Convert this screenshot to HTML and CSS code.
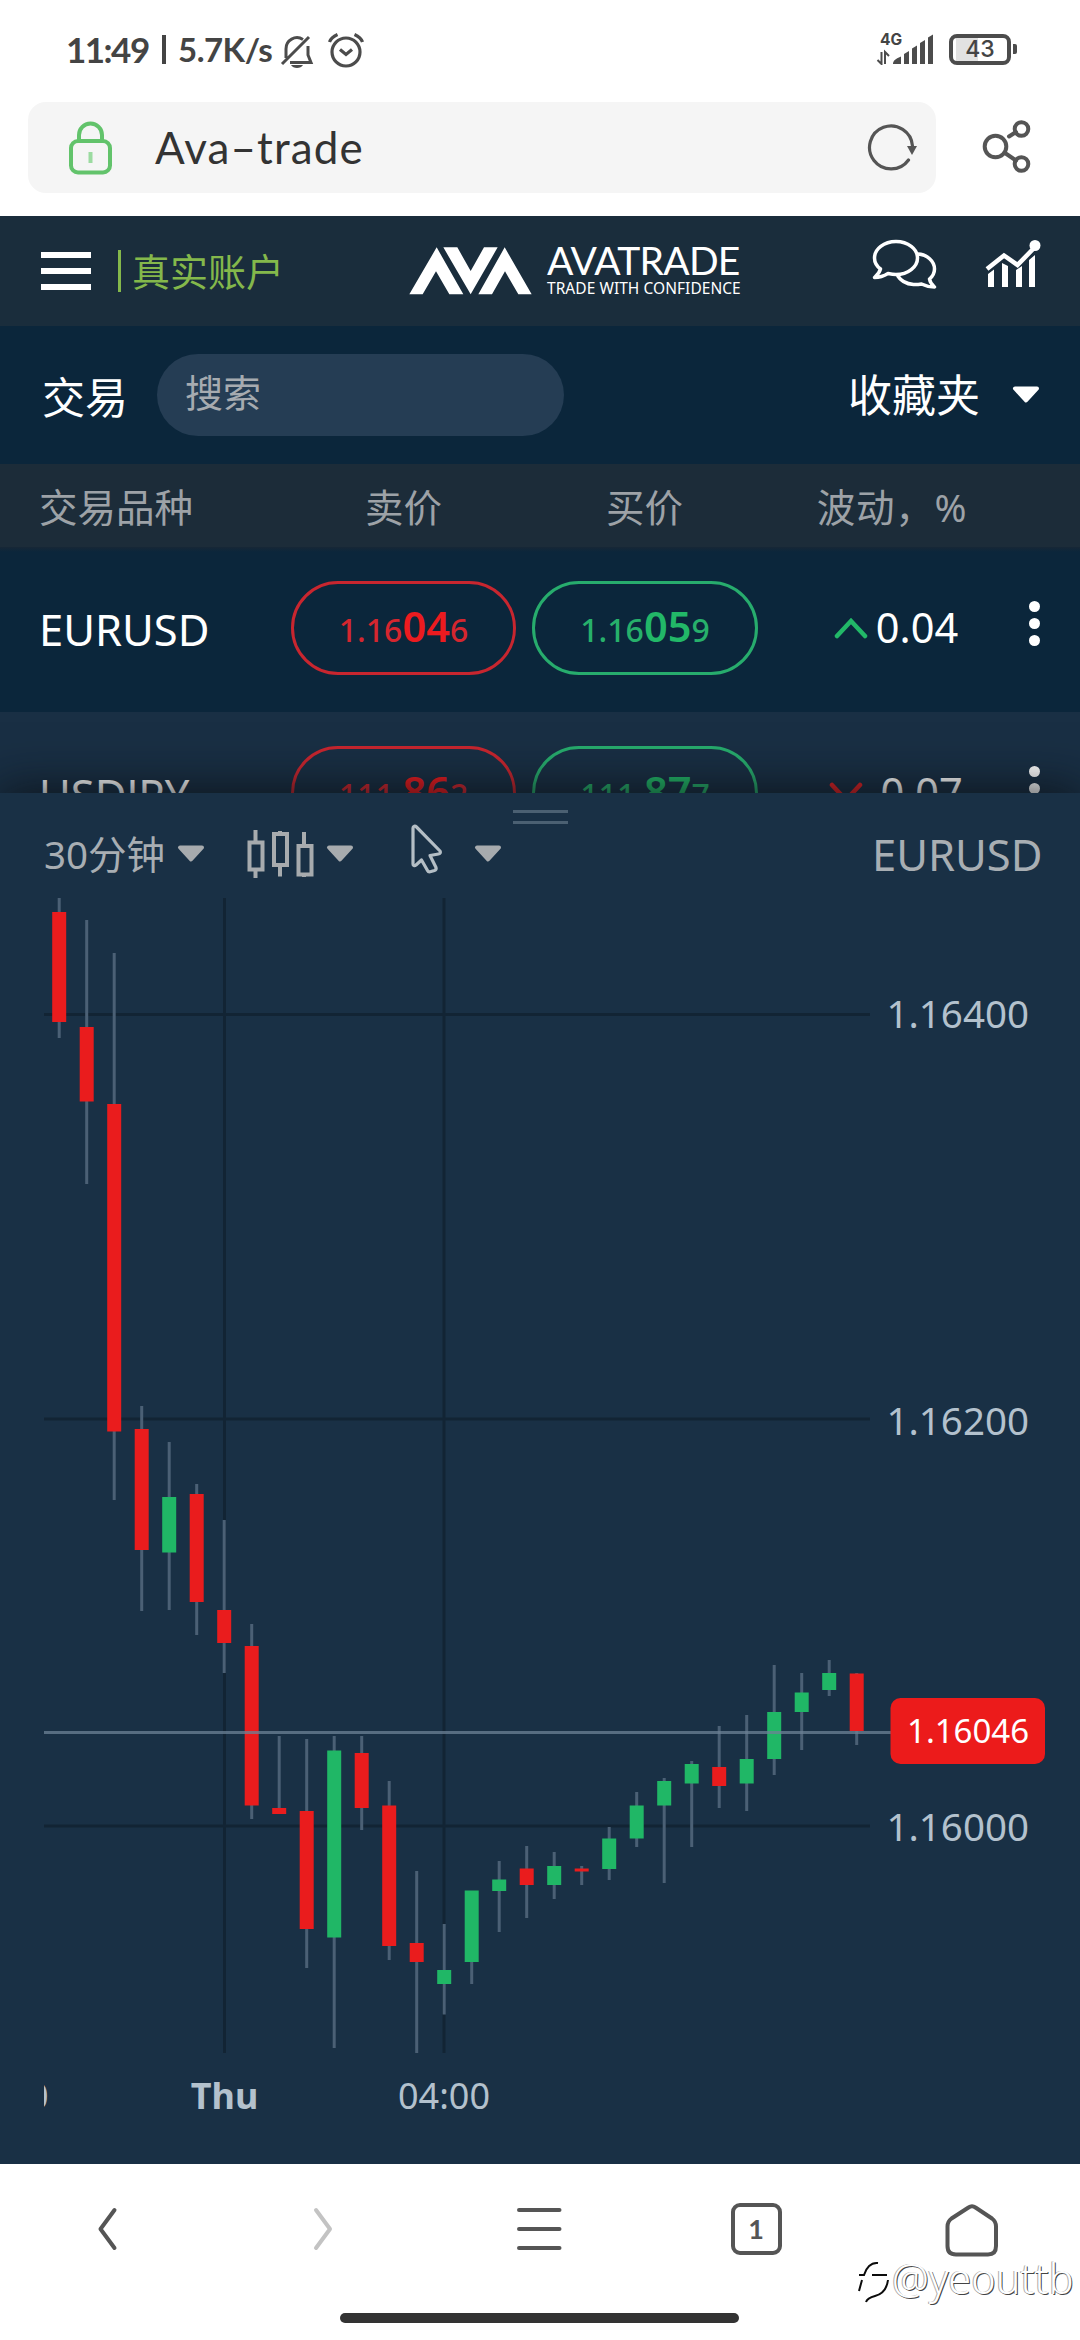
FILE: index.html
```html
<!DOCTYPE html>
<html lang="zh-CN">
<head>
<meta charset="utf-8">
<title>Ava-trade</title>
<link rel="stylesheet" href="styles.css">
</head>
<body>
<div class="status">
  <span class="clock">11:49</span><i class="sep"></i><span class="speed">5.7K/s</span>
  <svg class="mute" width="34" height="36" viewBox="280 32 34 36" fill="none" stroke="#4c4c4c" stroke-width="3">
    <path d="M286 58V49a11 11 0 0 1 17-9.500M308 46v9l3 7.500H290M282 64 309 37"/>
    <path d="M291 65h12c-2 4-10 4-12 0z" fill="#4c4c4c" stroke="none"/>
  </svg>
  <svg class="alarm" width="38" height="38" viewBox="327 31 38 38" fill="none" stroke="#4c4c4c" stroke-width="3.200">
    <circle cx="346" cy="52" r="14"/><path d="M340 49.500l6 5 6-5M329.500 42c1-3 3.500-5.500 8-7.500M362.500 42c-1-3-3.500-5.500-8-7.500"/>
  </svg>
  <div class="network">
    <span class="net-type">4G</span>
    <svg width="58" height="32" viewBox="875 32 58 32" fill="#4c4c4c">
      <path d="M880.500 51v12l-4-4M884 63V51l4 4" fill="none" stroke="#4c4c4c" stroke-width="2"/>
      <path d="M892 63c0-3 2-5 8-7.500V63zM903 53l5-3v13h-5zM911 47.500l5-3V63h-5zM919 42l5-3v24h-5zM927 36.500l5-3V63h-5z"/>
    </svg>
  </div>
  <div class="battery">43</div><i class="nub"></i>
</div>

<div class="browser">
  <div class="address">
    <svg class="lock" width="46" height="56" viewBox="67 118 46 56" fill="none" stroke="#62c36b" stroke-width="4">
      <path d="M79 139v-6a11.500 11.500 0 0 1 23 0v6" /><rect x="71" y="139" width="39" height="31.500" rx="7"/><path d="M90.500 150v11" stroke="#9bdba0"/>
    </svg>
    <span class="site">Ava–trade</span>
    <svg class="reload" width="54" height="52" viewBox="865 121 54 52" fill="none" stroke="#555" stroke-width="3.200">
      <path d="M907.500 159a21.500 21.500 0 1 1 4-14" stroke-linecap="round"/><path d="M906 145h10l-5 9z" fill="#555" stroke="none"/>
    </svg>
  </div>
  <svg class="share" width="52" height="58" viewBox="981 118 52 58" fill="none" stroke="#555" stroke-width="4">
    <circle cx="995.500" cy="146.500" r="10.800"/><circle cx="1021.500" cy="129" r="6.800"/><circle cx="1021.500" cy="164" r="6.800"/>
    <path d="M1009 136.500l7-4.500M1005 153l11 7.500" stroke-linecap="round"/>
  </svg>
</div>

<div class="appbar">
  <div class="burger"><i></i><i></i><i></i></div>
  <span class="account">真实账户</span>
  <svg class="mark" width="124" height="48" viewBox="27 65 372 144" fill="#fff">
    <path d="M28 207 110 66l80 141h-42l-40-69-40 69zM130 66h42l40 71 40-71h41l-81 141zM314 66 235 207h41l39-69 40 69h40z"/>
  </svg>
  <div class="brand"><span class="brand-name">AVATRADE</span><span class="brand-tag">TRADE WITH CONFIDENCE</span></div>
  <svg class="chat" width="66" height="54" viewBox="870 238 66 54" fill="none" stroke="#fff" stroke-width="3.500" stroke-linejoin="round">
    <path d="M879.500 269c-4-3-6-7-6-11 0-9 9.500-16.500 21.500-16.500s21.500 7.500 21.500 16.500-9.500 16.500-21.500 16.500c-3 0-5.500-.500-8-1-4 2.500-8 4-13.500 4 3-2.500 5-5 6-8.500z"/>
    <path d="M917 254c9 .500 16.500 7 16.500 15 0 4-2 7.500-5 10 .500 3 2 5.500 5 8-5 0-9-1-13-3-3 .500-5.500 .700-8 .500-7-.500-13-4-16-9"/>
  </svg>
  <svg class="trend" width="58" height="50" viewBox="984 239 58 50" fill="#fff">
    <path d="M986 269l17-13.500 13.500 9.500L1034 247" fill="none" stroke="#fff" stroke-width="4.500"/><circle cx="1034" cy="245.500" r="5.500"/>
    <path d="M987 274l6-4.500V287h-6zM1001 263l6 3v21h-6zM1015 270l6-4v21h-6zM1028 260l6-5v32h-6z"/>
  </svg>
</div>

<div class="search-row">
  <span class="title">交易</span>
  <div class="search">搜索</div>
  <span class="favorites">收藏夹</span>
  <svg width="28" height="18" viewBox="0 0 28 18"><path class="tri white" d="M3 2.500h22L14 14.500z"/></svg>
</div>

<div class="line head">
  <span class="symbol">交易品种</span><span class="cell">卖价</span><span class="cell">买价</span><span class="change">波动，%</span>
</div>

<div class="quotes">
  <div class="line quote first">
    <span class="symbol">EURUSD</span>
    <div class="cell price sell"><span>1.16<b>04</b>6</span></div>
    <div class="cell price buy"><span>1.16<b>05</b>9</span></div>
    <span class="change"><svg width="34" height="22" viewBox="0 0 34 22"><path class="chev up" d="M3 19 17 4l14 15"/></svg>0.04</span>
    <span class="dots"><i></i><i></i><i></i></span>
  </div>
  <div class="line quote second">
    <span class="symbol">USDJPY</span>
    <div class="cell price sell"><span>111.<b>86</b>2</span></div>
    <div class="cell price buy"><span>111.<b>87</b>7</span></div>
    <span class="change"><svg width="34" height="22" viewBox="0 0 34 22"><path class="chev down" d="M3 3l14 15L31 3"/></svg>-0.07</span>
    <span class="dots"><i></i><i></i><i></i></span>
  </div>
</div>

<div class="panel">
  <i class="grip"></i>
  <div class="tools">
    <span class="period">30分钟</span>
    <svg class="a1" width="28" height="18" viewBox="0 0 28 18"><path class="tri" d="M3 2.500h22L14 14.500z"/></svg>
    <svg class="candles" width="68" height="50" viewBox="245 829 68 50" fill="none" stroke="#a7abae" stroke-width="4">
      <path d="M248.500 842.500h13v27h-13zM273 834h13v31h-13zM297.500 846h13v28.500h-13zM254.500 830v12M254.500 870v8M279 831v3M279 865v11.500M303 832v14M303 875v2"/>
    </svg>
    <svg class="a2" width="28" height="18" viewBox="0 0 28 18"><path class="tri" d="M3 2.500h22L14 14.500z"/></svg>
    <svg class="cursor" width="36" height="52" viewBox="408 823 36 52" fill="none" stroke="#b4bec5" stroke-width="3.200" stroke-linejoin="round">
      <path d="M412 828c0-2 2-2.500 3.500-1L439 851c1 1.500 0 3-1.500 3L429 855.500l6 12c.500 1.500 0 2.500-1.500 3l-3.500 1c-1.500 .500-3 0-3.500-1l-6-10.500-5.500 5c-1.500 1.200-3 .500-3-1z"/>
    </svg>
    <svg class="a3" width="28" height="18" viewBox="0 0 28 18"><path class="tri" d="M3 2.500h22L14 14.500z"/></svg>
    <span class="pair">EURUSD</span>
  </div>
  <svg class="chart" width="1080" height="1266" viewBox="0 898 1080 1266">
    <path class="grid" d="M44 1014.500H870M44 1419H870M44 1826H870M224.500 898V2053M444 898V2053"/>
    <path class="wick" d="M59.200 898V1038M86.700 920V1184M114.200 953V1500M141.700 1406V1611M169.200 1442V1610M196.700 1484V1635M224.200 1520V1673M251.700 1624V1819M279.200 1736V1812M306.700 1739V1968M334.200 1736V2048M361.700 1736V1830M389.200 1781V1960M416.700 1871V2053M444.200 1924V2014.500M471.700 1891V1984M499.200 1861V1932M526.700 1846V1918M554.200 1852V1899M581.700 1866V1885M609.200 1827V1880M636.700 1792V1847M664.200 1778V1883M691.700 1761V1847M719.200 1726V1808M746.700 1715V1811M774.200 1665V1775M801.700 1673V1750M829.200 1660V1696M856.700 1673V1745"/>
    <path class="fall" d="M59.200 912V1022M86.700 1027V1101.500M114.200 1104V1431.500M141.700 1429V1550M196.700 1494V1602M224.200 1610V1643M251.700 1646V1805.500M279.200 1808V1814M306.700 1811V1929M361.700 1753V1808M389.200 1805.500V1946M416.700 1943V1962M526.700 1868.500V1885M581.700 1868.500V1871.500M719.200 1767V1786M856.700 1673.500V1731"/>
    <path class="rise" d="M169.200 1497V1552.500M334.200 1750.500V1937.500M444.200 1970V1984M471.700 1890.500V1962M499.200 1879.500V1891M554.200 1866V1885M609.200 1838.500V1869M636.700 1805.500V1838.500M664.200 1781V1805.500M691.700 1764V1783.500M746.700 1759V1783.500M774.200 1712V1759M801.700 1692.500V1712M829.200 1673V1690"/>
    <path class="last" d="M44 1732.500H892"/>
    <g class="axis">
      <text x="886.500" y="1028">1.16400</text><text x="886.500" y="1434.500">1.16200</text><text x="886.500" y="1841">1.16000</text>
    </g>
    <rect x="890.500" y="1698" width="154.500" height="66" rx="10" fill="#ec1b1b"/>
    <text class="tag" x="907" y="1743">1.16046</text>
    <g class="time"><text class="day" x="224.500" y="2108.500">Thu</text><text x="444" y="2108.500">04:00</text></g>
    <svg x="44" y="2070" width="60" height="50"><text class="cut" x="4.500" y="38.500">20:00</text></svg>
  </svg>
</div>

<div class="nav">
  <svg width="216" height="64" viewBox="0 2196 216 64"><path class="ln" d="M114.500 2210l-14 19 14 19"/></svg>
  <svg width="216" height="64" viewBox="216 2196 216 64"><path class="ln off" d="M316 2210l14 19-14 19"/></svg>
  <svg width="216" height="64" viewBox="432 2196 216 64"><path class="ln" d="M519 2210H559.500M519 2229H559.500M519 2248H559.500"/></svg>
  <div class="tabs"><span>1</span></div>
  <svg width="216" height="64" viewBox="864 2196 216 64"><path class="ln" d="M968.500 2207.500q3.500-2.500 7 0L992 2218.500q4 3 4 8V2246q0 8.500-8 8.500H956q-8.500 0-8.500-8.500V2226.500q0-5 4-8z"/></svg>
  <i class="home-bar"></i>
</div>
<div class="watermark">
  <svg width="36" height="46" viewBox="0 0 36 46" fill="none" stroke="#0c0c0c" stroke-width="2"><path d="M3 15h5C10 8 15 2 22 3M16 15h15M6 20 3 31M32 20c-1 8-5 14-13 16-4 1-8 3-9 6"/></svg>
  <span>@yeouttb</span>
</div>
</body>
</html>
```

FILE: styles.css
```css
* { box-sizing: border-box; }
body {
  margin: 0;
  width: 1080px;
  height: 2340px;
  overflow: hidden;
  position: relative;
  display: flex;
  flex-direction: column;
  background: #fff;
  color: #fff;
  font-family: "Noto Sans", "Noto Sans CJK SC", sans-serif;
  white-space: nowrap;
}
svg { display: block; flex: none; }
span, i { flex: none; }

.status {
  height: 102px;
  padding: 0 0 4px 66px;
  display: flex;
  align-items: center;
  color: #444;
  font-family: Lato, "Noto Sans", sans-serif;
  font-weight: 700;
}
.clock { width: 96px; font-size: 35px; letter-spacing: -1.5px; }
.sep { width: 4px; height: 29px; background: #444; }
.speed { width: 99px; margin-left: 12px; font-size: 33px; letter-spacing: -0.5px; }
.mute { margin: 1px 0 0 3px; }
.alarm { margin: 2px 0 0 13px; }
.network { position: relative; margin-left: 511px; width: 58px; }
.net-type { position: absolute; left: 4px; top: -1px; font: 700 15.5px/16px Inter, sans-serif; }
.battery {
  margin-left: 15px;
  width: 62px;
  height: 31px;
  border: 4px solid #4c4c4c;
  border-radius: 8px;
  font: 500 23px/23px Inter, sans-serif;
  text-align: center;
  background: linear-gradient(90deg, #fff 3px, #e2e2e2 3px, #e2e2e2 25px, #fff 25px);
}
.nub { width: 4px; height: 10px; margin-left: 2px; border-radius: 0 2px 2px 0; background: #4c4c4c; }

.browser { height: 114px; display: flex; align-items: flex-start; padding-left: 28px; }
.address {
  width: 908px;
  height: 91px;
  border-radius: 18px;
  background: #f5f5f5;
  display: flex;
  align-items: center;
}
.lock { margin-left: 39px; }
.site { margin-left: 42px; width: 250px; color: #333; font: 400 44px/91px Lato, sans-serif; letter-spacing: 1.1px; }
.reload { margin-left: 461px; }
.share { margin: 16px 0 0 45px; }

.appbar { height: 110px; background: #1a2d3c; display: flex; align-items: center; }
.burger { margin-left: 41px; width: 50px; display: grid; gap: 10px; }
.burger i { height: 6px; background: #fff; }
.account {
  width: 191px;
  margin-left: 27px;
  padding-left: 11px;
  border-left: 3px solid #84b84b;
  color: #84b84b;
  font-size: 38px;
  line-height: 42px;
}
.mark { margin-left: 100px; }
.brand { margin: 0 0 0 14px; width: 196px; display: grid; }
.brand-name { font: 400 39px/35px Lato, sans-serif; letter-spacing: -0.7px; }
.brand-tag { font: 400 15.5px/21px "Noto Sans", sans-serif; letter-spacing: 0.05px; }
.chat { margin: -12px 0 0 128px; }
.trend { margin: -14px 0 0 48px; }

.search-row { height: 138px; padding-left: 42px; background: #0b263b; display: flex; align-items: center; font-size: 43px; }
.title { width: 115px; padding-top: 1px; }
.search { width: 407px; height: 82px; border-radius: 41px; padding-left: 28px; background: #253d54; color: #a6abb0; font-size: 38px; line-height: 76px; }
.favorites { margin: -4px 32px 0 284px; width: 132px; font-size: 44px; }
.tri { fill: #a7abae; stroke: #a7abae; stroke-width: 4; stroke-linejoin: round; }
.tri.white { fill: #fff; stroke: #fff; }

.line { display: flex; align-items: center; padding-left: 39px; }
.symbol { width: 252px; }
.cell { width: 225px; margin-right: 16px; text-align: center; }
.change { width: 244px; display: flex; align-items: center; justify-content: center; gap: 8px; }
.head { height: 83px; padding-bottom: 2px; background: #1c2c39; color: #9da2a7; font-size: 38.5px; }
.head .change { display: block; padding-right: 6px; text-align: center; letter-spacing: 0.7px; }

.quotes { height: 246px; overflow: hidden; }
.quote { height: 165px; align-items: flex-start; padding-top: 34px; font-size: 43.5px; line-height: 94px; }
.first { background: linear-gradient(#172736, #0b263b 5px); }
.second { background: #192f44; }
.quote .symbol { padding-top: 1px; }
.price { height: 94px; border: 3px solid; border-radius: 47px; font-size: 32px; font-weight: 500; line-height: 92px; }
.price b { font-size: 41.5px; font-weight: 600; line-height: 1; }
.sell { color: #d5262f; border-color: #c8262f; }
.buy { color: #27b06b; border-color: #27ac6d; width: 226px; }
.sell b { color: #ec1b1f; }
.buy b { color: #22b868; }
.quote .change { font-size: 41.5px; line-height: 93px; }
.chev { fill: none; stroke-width: 4.5; stroke-linecap: round; }
.up { stroke: #22b868; }
.down { stroke: #e02225; }
.second .change { gap: 4px; }
.dots { width: 32px; display: grid; gap: 6px; justify-items: center; padding-top: 20px; }
.dots i { width: 11px; height: 11px; border-radius: 50%; background: #fff; }

.panel { position: relative; height: 1371px; background: #193045; box-shadow: 0 0 46px 2px rgba(10, 14, 18, 0.85); }
.grip { position: absolute; left: 513px; top: 17px; width: 55px; height: 14px; border: solid #4b6072; border-width: 3px 0; }
.tools { height: 105px; padding: 17px 0 0 44px; display: flex; align-items: center; color: #a8aeb3; }
.period { width: 121px; margin-top: -5px; font-size: 38.5px; }
.a1 { margin-left: 12px; }
.candles { margin-left: 41px; }
.a2 { margin-left: 12px; }
.cursor { margin: -10px 0 0 55px; }
.a3 { margin-left: 29px; }
.pair { margin: -1px 0 0 370px; font-size: 43.5px; }
.grid { fill: none; stroke: #122434; stroke-width: 3; }
.wick { fill: none; stroke: #4b6075; stroke-width: 3; }
.fall, .rise { fill: none; stroke-width: 14; stroke: #ea1c1d; }
.rise { stroke: #20b766; }
.last { stroke: #6c8296; stroke-opacity: 0.75; stroke-width: 3; }
.axis { fill: #b3c1cd; font-size: 38.500px; }
.tag { fill: #fff; font-size: 33px; }
.time { fill: #b3c1cd; font-size: 36px; text-anchor: middle; }
.day { font-weight: 700; }
.cut { fill: #b3c1cd; font-size: 36px; text-anchor: end; }

.nav { position: relative; height: 176px; padding-top: 32px; display: flex; align-items: flex-start; background: #fff; }
.ln { fill: none; stroke: #555; stroke-width: 4; stroke-linecap: round; stroke-linejoin: round; }
.off { stroke: #c3c3c3; }
.tabs { width: 216px; display: flex; justify-content: center; padding-top: 7px; }
.tabs span {
  width: 51px;
  height: 52px;
  border: 4px solid #555;
  border-radius: 9px;
  color: #555;
  font: 700 27px/43px Lato, sans-serif;
  text-align: center;
}
.home-bar { position: absolute; left: 340px; top: 149px; width: 399px; height: 10px; border-radius: 5px; background: #333; }
.watermark {
  position: absolute;
  left: 856px;
  top: 2260px;
  display: flex;
  gap: 0;
  color: #fff;
  font: 300 41.5px/36px "Noto Sans", sans-serif;
  text-shadow: 1px 1px 0 #444, -1px -0.5px 0 #aaa;
}
```
